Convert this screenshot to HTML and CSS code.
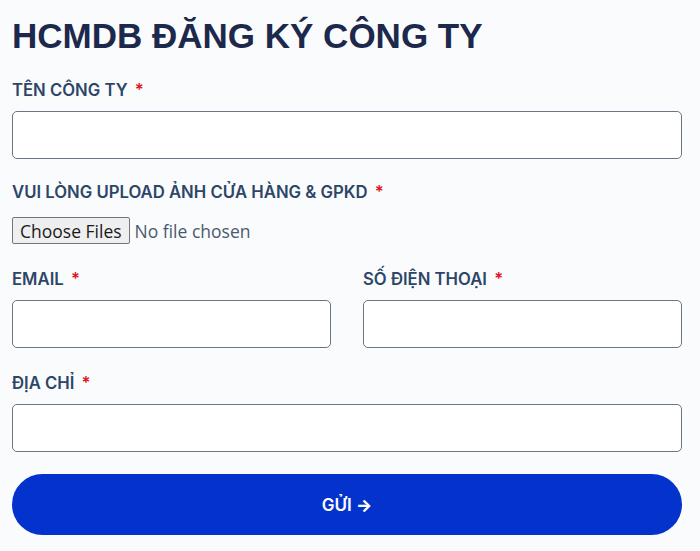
FILE: index.html
```html
<!DOCTYPE html>
<html lang="vi">
<head>
<meta charset="utf-8">
<title>HCMDB Đăng ký công ty</title>
<link rel="stylesheet" href="styles.css">
</head>
<body>
<form class="form">
  <h1 class="title">HCMDB ĐĂNG KÝ CÔNG TY</h1>

  <div class="group">
    <label class="label">TÊN CÔNG TY <span class="req">*</span></label>
    <input class="field" type="text">
  </div>

  <div class="group">
    <label class="label label-file">VUI LÒNG UPLOAD ẢNH CỬA HÀNG &amp; GPKD <span class="req">*</span></label>
    <input class="file" type="file" multiple>
  </div>

  <div class="row">
    <div class="group">
      <label class="label">EMAIL <span class="req">*</span></label>
      <input class="field" type="email">
    </div>
    <div class="group">
      <label class="label">SỐ ĐIỆN THOẠI <span class="req">*</span></label>
      <input class="field" type="tel">
    </div>
  </div>

  <div class="group group-spaced">
    <label class="label">ĐỊA CHỈ <span class="req">*</span></label>
    <input class="field" type="text">
  </div>

  <button class="submit" type="button">GỬI <span class="arrow">&#x2192;</span></button>
</form>
</body>
</html>
```

FILE: styles.css
```css
* { box-sizing: border-box; }

html, body {
  margin: 0;
  padding: 0;
  background: #fafbfc;
}

body {
  font-family: "Inter", "Liberation Sans", sans-serif;
}

.form {
  width: 670px;
  margin-left: 12px;
  display: flex;
  flex-direction: column;
}

.title {
  margin: 15px 0 0 0;
  font-family: "Liberation Sans", Arial, sans-serif;
  font-weight: 700;
  font-size: 35px;
  line-height: 42px;
  color: #1c294c;
}

.group {
  display: flex;
  flex-direction: column;
  margin-top: 21px;
}

.row {
  display: grid;
  grid-template-columns: 1fr 1fr;
  column-gap: 32px;
  margin-top: 2px;
}

.group-spaced {
  margin-top: 23px;
}

.label {
  display: block;
  font-size: 16.7px;
  line-height: 24px;
  font-weight: 600;
  color: #2d4668;
  margin-bottom: 9px;
}

.label-file {
  margin-bottom: 13px;
}

.req {
  color: #e0141e;
  margin-left: 3px;
}

.field {
  height: 48px;
  width: 100%;
  border: 1.5px solid #6b7685;
  border-radius: 5px;
  background: #ffffff;
  margin: 0;
}

.file {
  font-family: "Open Sans", "Liberation Sans", sans-serif;
  font-size: 17.5px;
  color: #4a5a6e;
  margin: 0;
  height: 27px;
}

.file::file-selector-button {
  font-family: "Open Sans", "Liberation Sans", sans-serif;
  font-size: 17.5px;
  color: #1a1a1a;
  background: #efefef;
  border: 1px solid #767676;
  border-radius: 2px;
  height: 27px;
  padding: 0 7px;
  margin-right: 5px;
}

.submit {
  margin-top: 22px;
  height: 61px;
  width: 100%;
  border: none;
  border-radius: 31px;
  background: #0333cc;
  color: #ffffff;
  font-family: "Inter", "Liberation Sans", sans-serif;
  font-weight: 600;
  font-size: 17px;
}

.arrow {
  font-weight: 800;
}
```
